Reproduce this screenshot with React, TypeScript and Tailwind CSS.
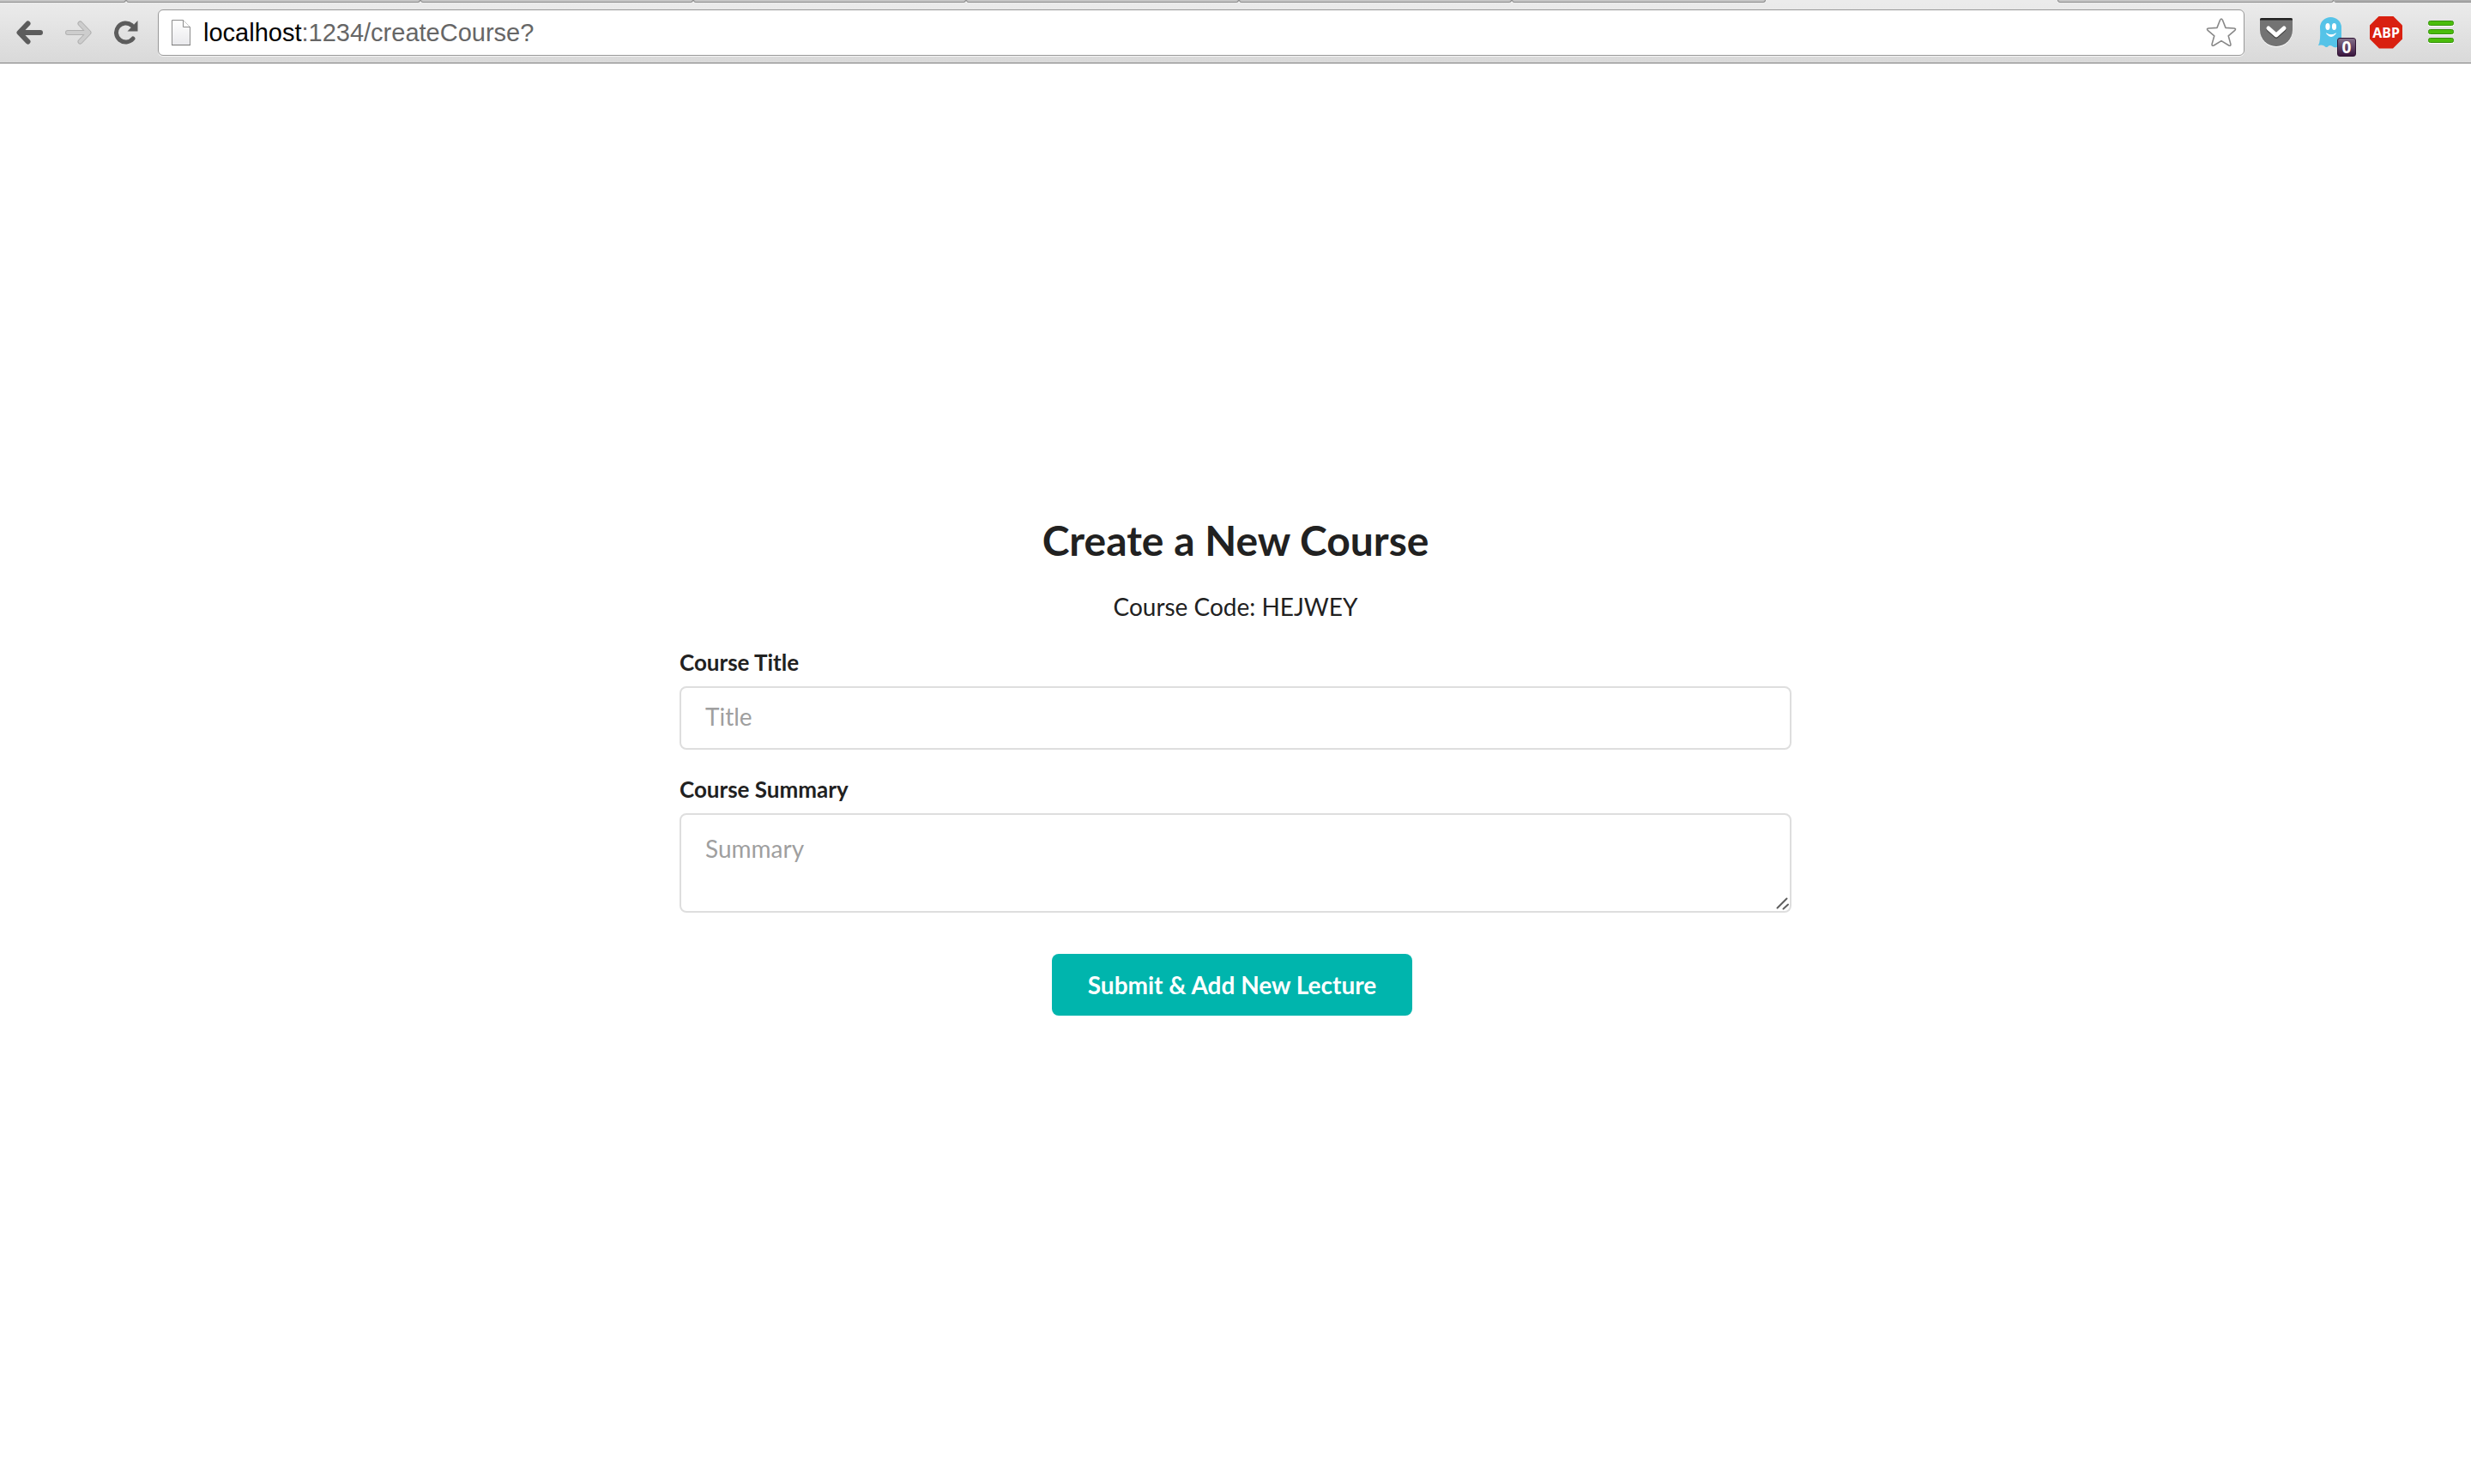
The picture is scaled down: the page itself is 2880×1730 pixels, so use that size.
import React from "react";

const tabClass = "h-full w-[318px] rounded-b border-x border-b border-[#8c8c8c] bg-[#c6c6c6]";

function TabStrip() {
  return (
    <div aria-hidden="true" className="flex h-[3px] w-full">
      <div className="h-full w-[147px] rounded-br border-r border-b border-[#8c8c8c] bg-[#c6c6c6]" />
      <div className="h-full w-[343px] rounded-b border-x border-b border-[#8c8c8c] bg-[#c6c6c6]" />
      <div className={tabClass} />
      <div className={tabClass} />
      <div className={tabClass} />
      <div className={tabClass} />
      <div className="h-full flex-1 rounded-b border-x border-b border-[#8c8c8c] bg-[#c6c6c6]" />
      <div className="h-full w-[340px] bg-[#ebebeb]" />
      <div className="h-full w-[322px] rounded-b border-x border-b border-[#8c8c8c] bg-[#c6c6c6]" />
      <div className="h-full w-[160px] rounded-bl border-b border-[#8c8c8c] bg-[#adadad]" />
    </div>
  );
}

function BackIcon() {
  return (
    <svg width="32" height="28" viewBox="0 0 32 28" fill="none" aria-hidden="true">
      <path d="M28 14H5M13.500 3.500L3.500 14L13.500 24.500" stroke="#5c5c5c" strokeWidth="6" strokeLinecap="round" strokeLinejoin="round" />
    </svg>
  );
}

function ForwardIcon() {
  return (
    <svg width="32" height="28" viewBox="0 0 32 28" fill="none" aria-hidden="true">
      <path d="M4 14H27M18.500 3.500L28.500 14L18.500 24.500" stroke="#b0b0b0" strokeWidth="6" strokeLinecap="round" strokeLinejoin="round" />
      <path d="M4 14H27M18.500 3.500L28.500 14L18.500 24.500" stroke="#cdcdcd" strokeWidth="4" strokeLinecap="round" strokeLinejoin="round" />
    </svg>
  );
}

function ReloadIcon() {
  return (
    <svg width="28" height="28" viewBox="0 0 28 28" fill="none" aria-hidden="true">
      <path d="M22 21A11 11 0 1 1 20.500 5.500" stroke="#5c5c5c" strokeWidth="5" strokeLinecap="round" />
      <path d="M27.500 0V12.500H15.500Z" fill="#5c5c5c" />
    </svg>
  );
}

function PageIcon() {
  return (
    <svg width="24" height="32" viewBox="0 0 24 32" fill="none" aria-hidden="true">
      <defs>
        <linearGradient id="sheet" x1="0" y1="0" x2="0" y2="1">
          <stop stopColor="#fff" />
          <stop offset="1" stopColor="#e9e9ec" />
        </linearGradient>
      </defs>
      <path d="M1.500 1.500H14.500L22.500 9.500V30.500H1.500Z" fill="url(#sheet)" stroke="#8d8d8d" />
      <path d="M14.500 1.500V9.500H22.500" fill="#fff" stroke="#8d8d8d" />
      <path d="M1 30.500H23" stroke="#777" />
    </svg>
  );
}

function StarIcon() {
  return (
    <svg width="36" height="36" viewBox="0 0 36 36" fill="none" aria-hidden="true">
      <path d="M16.600 3.300Q18 .6 19.400 3.300L23 12.400L33 13Q35.600 13.500 33.800 15.400L26.200 21.800L28.900 31.400Q29.300 34 26.800 33L18 27.600L9.200 33Q6.700 34 7.100 31.400L9.800 21.800L2.200 15.400Q.4 13.500 3 13L13 12.400Z" stroke="#888" strokeWidth="1.600" strokeLinejoin="round" />
    </svg>
  );
}

function PocketIcon() {
  return (
    <svg width="38" height="34" viewBox="0 0 38 34" fill="none" aria-hidden="true">
      <path d="M0 3Q0 1 2 1H36Q38 1 38 3V15A19 19 0 0 1 0 15Z" fill="#fff" />
      <path d="M0 2Q0 0 2 0H36Q38 0 38 2V14A19 19 0 0 1 0 14Z" fill="#737373" />
      <path d="M0 2.500V2Q0 0 2 0H36Q38 0 38 2V2.500Z" fill="#222" />
      <path d="M10 13.500L19 21.500L28 13.500" stroke="#444" strokeWidth="5" strokeLinecap="round" strokeLinejoin="round" />
      <path d="M10 12L19 20L28 12" stroke="#fff" strokeWidth="5" strokeLinecap="round" strokeLinejoin="round" />
    </svg>
  );
}

function GhostIcon() {
  return (
    <svg width="27" height="36" viewBox="0 0 27 36" aria-hidden="true">
      <path d="M2 12A12.500 12 0 0 1 27 12V36Q24 33.500 21.500 35Q19 36 16.500 34Q13.500 32 11 34.500Q9 36 7 33.500Q4 32 0 33Q3 28 2 12Z" fill="#55c3e8" />
      <ellipse cx="11" cy="11" rx="2.600" ry="4" fill="#fff" />
      <ellipse cx="18.500" cy="11" rx="2.600" ry="4" fill="#fff" />
      <path d="M9.500 19Q15 22.500 20.500 19Q15 26 9.500 19Z" fill="#fff" stroke="#fff" />
    </svg>
  );
}

function MenuIcon() {
  return (
    <svg width="30" height="27" viewBox="0 0 30 27" aria-hidden="true">
      <g fill="#fff">
        <rect y="1" width="30" height="6" rx="2" />
        <rect y="11" width="30" height="6" rx="2" />
        <rect y="21" width="30" height="6" rx="2" />
      </g>
      <g fill="#4bbd0c" stroke="#35900a">
        <rect x=".5" y=".5" width="29" height="5" rx="2" />
        <rect x=".5" y="10.500" width="29" height="5" rx="2" />
        <rect x=".5" y="20.500" width="29" height="5" rx="2" />
      </g>
    </svg>
  );
}

function AddressBar() {
  return (
    <div className="flex h-[54px] flex-1 items-center rounded-md border border-[#979797] bg-white pr-2 pl-[14px] shadow-[0_1px_0_#f5f5f5]">
      <PageIcon />
      <div className="relative ml-[14px] h-9 flex-1 font-['Liberation_Sans',Arial,sans-serif] text-[29px] leading-9">
        <input
          aria-label="Address"
          defaultValue="localhost:1234/createCourse?"
          className="h-9 w-full bg-transparent text-transparent caret-black outline-none"
        />
        <div aria-hidden="true" className="pointer-events-none absolute inset-0 whitespace-nowrap text-[#666]">
          <span className="text-black">localhost</span>:1234/createCourse?
        </div>
      </div>
      <button type="button" aria-label="Bookmark this page">
        <StarIcon />
      </button>
    </div>
  );
}

function Toolbar() {
  return (
    <div className="flex h-[71px] items-center border-b border-[#7d7d7d] bg-linear-to-b from-[#ebebeb] to-[#d9d9d9] pr-5 pb-px pl-[19px]">
      <button type="button" aria-label="Back">
        <BackIcon />
      </button>
      <button type="button" aria-label="Forward" className="ml-6">
        <ForwardIcon />
      </button>
      <button type="button" aria-label="Reload" className="mr-[23px] ml-[26px]">
        <ReloadIcon />
      </button>
      <AddressBar />
      <div className="ml-[18px] flex items-center">
        <button type="button" aria-label="Save to Pocket">
          <PocketIcon />
        </button>
        <button type="button" aria-label="Ghostery" className="relative ml-[30px]">
          <GhostIcon />
          <span className="absolute -right-[17px] -bottom-[10px] flex h-[22px] w-[22px] items-center justify-center rounded-[3px] border border-[#2f1433] bg-linear-to-b from-[#85708a] to-[#3a153f] font-['Open_Sans',sans-serif] text-[19px] leading-5 font-bold text-white">
            0
          </span>
        </button>
        <button
          type="button"
          aria-label="Adblock Plus"
          className="ml-[33px] flex h-[38px] w-[38px] items-center justify-center bg-[#d92010] font-['Noto_Sans',sans-serif] text-[16px] font-bold text-white [clip-path:polygon(29%_0,71%_0,100%_29%,100%_71%,71%_100%,29%_100%,0_71%,0_29%)]"
        >
          ABP
        </button>
        <button type="button" aria-label="Menu" className="ml-[30px]">
          <MenuIcon />
        </button>
      </div>
    </div>
  );
}

function CourseForm() {
  return (
    <form onSubmit={(event) => event.preventDefault()} className="mx-auto w-[45%] pt-[525px]">
      <h1 className="text-center text-[48px] leading-[62px] font-bold">Create a New Course</h1>
      <p className="mt-[26px] text-center text-[28px] leading-10">Course Code: HEJWEY</p>
      <label htmlFor="title" className="mt-[25px] block text-[26px] leading-10 font-bold">
        Course Title
      </label>
      <input
        id="title"
        type="text"
        placeholder="Title"
        className="mt-2 block h-[74px] w-full rounded-lg border-2 border-[#dedede] px-7 pb-1 text-[28px] outline-none placeholder:text-[#9f9f9f]"
      />
      <label htmlFor="summary" className="mt-[26px] block text-[26px] leading-10 font-bold">
        Course Summary
      </label>
      <div className="relative mt-2">
        <textarea
          id="summary"
          placeholder="Summary"
          className="block h-[116px] w-full resize-y rounded-lg border-2 border-[#dedede] px-7 py-[19px] text-[28px] leading-10 outline-none placeholder:text-[#9f9f9f] [&::-webkit-resizer]:bg-transparent"
        />
        <svg width="20" height="20" viewBox="0 0 20 20" aria-hidden="true" className="pointer-events-none absolute right-0 bottom-0">
          <path d="M3.500 14.500L14.500 3.500M10.500 15.500L16 10.500" fill="none" stroke="#5f5f5f" strokeWidth="2" strokeLinecap="round" />
        </svg>
      </div>
      <div className="mt-12 flex justify-center pr-2">
        <button type="submit" className="h-[72px] rounded-lg bg-[#00b5ad] px-[42px] text-[28px] font-bold text-white">
          Submit &amp; Add New Lecture
        </button>
      </div>
    </form>
  );
}

export default function App() {
  return (
    <div className="min-h-screen bg-white">
      <header>
        <TabStrip />
        <Toolbar />
      </header>
      <main className="font-[Lato,sans-serif] text-[#212121]">
        <CourseForm />
      </main>
    </div>
  );
}
